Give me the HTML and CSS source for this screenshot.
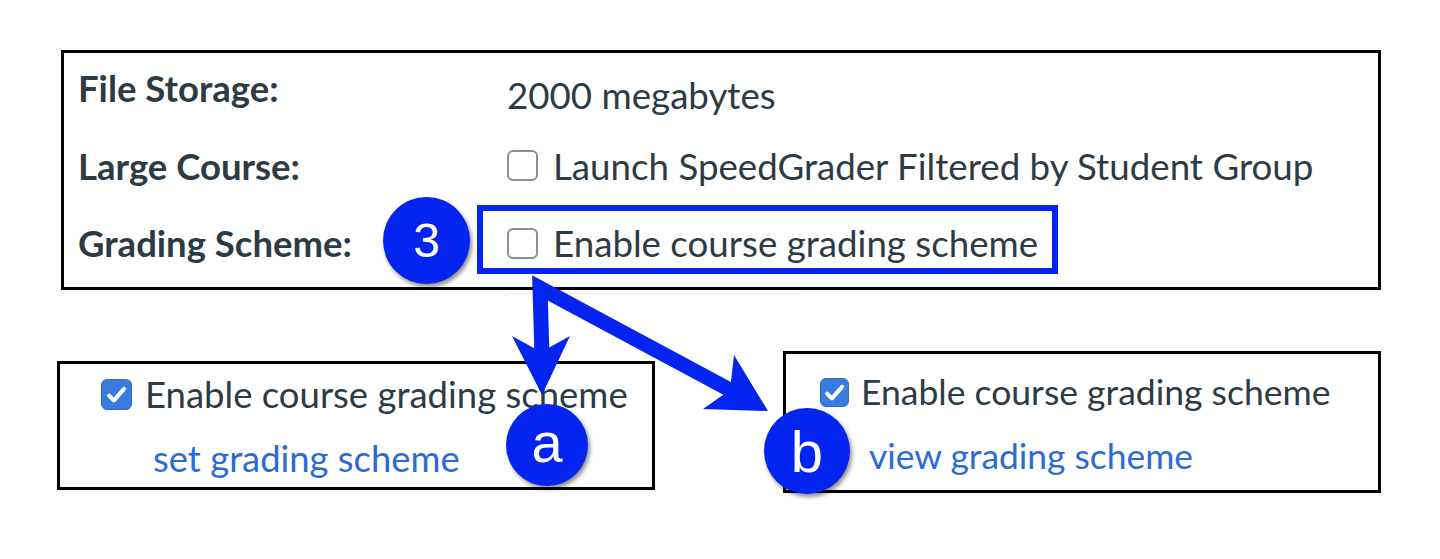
FILE: index.html
```html
<!DOCTYPE html>
<html lang="en">
<head>
    <meta charset="UTF-8">
    <meta name="viewport" content="width=device-width, initial-scale=1.0">
    <title>Grading Scheme Setting</title>
    <link rel="stylesheet" href="styles.css">
</head>
<body>

    <div class="shot">
        <!-- course details panel -->
        <section class="settings">
            <div class="label">File Storage:</div>
            <div class="value value-text">2000 megabytes</div>

            <div class="label">Large Course:</div>
            <label class="value"><span class="box"></span>Launch SpeedGrader Filtered by Student Group</label>

            <div class="label">Grading Scheme:</div>
            <label class="value"><span class="box"></span>Enable course grading scheme</label>
        </section>

        <!-- the two outcomes once the box is ticked -->
        <div class="results">
            <section class="card card-a">
                <label class="check">
                    <span class="box checked">
                        <svg viewBox="0 0 20 20"><path d="M4.5 10.8l3.6 3.6L15.6 5.8" /></svg>
                    </span>
                    Enable course grading scheme
                </label>
                <a class="link" href="#">set grading scheme</a>
            </section>

            <section class="card card-b">
                <label class="check">
                    <span class="box checked">
                        <svg viewBox="0 0 20 20"><path d="M4.5 10.8l3.6 3.6L15.6 5.8" /></svg>
                    </span>
                    Enable course grading scheme
                </label>
                <a class="link" href="#">view grading scheme</a>
            </section>
        </div>

        <!-- callouts drawn over the panels -->
        <svg class="marks" width="1440" height="559" viewBox="0 0 1440 559">
            <line x1="508" y1="293" x2="800" y2="293" stroke="#e4e4e4" stroke-width="1" />
            <rect x="480" y="208" width="575" height="63" fill="none" stroke="#0424ef" stroke-width="6" />
            <polyline points="542,356 540,288 732,391" fill="none" stroke="#0424ef" stroke-width="15" stroke-linejoin="miter" />
            <polygon points="542,395 512,336 541,352 570,336" fill="#0424ef" />
            <polygon points="768,411 734,355 730,390 703,409" fill="#0424ef" />
        </svg>

        <span class="step step-3">3</span>
        <span class="step step-a">a</span>
        <span class="step step-b">b</span>
    </div>

</body>
</html>
```

FILE: styles.css
```css
body {
    margin: 0;
    background: white;
    font-family: Lato, "Open Sans", sans-serif;
    color: #2d3b45;
}
.shot {
    position: relative;
    width: 1440px;
    height: 559px;
    overflow: hidden;
}

/* top panel */
.settings {
    box-sizing: border-box;
    width: 1320px;
    height: 240px;
    margin: 50px 0 0 61px;
    border: 3px solid #000;
    padding: 13px 0 0 14px;
    display: grid;
    grid-template-columns: 429px 1fr;
    align-content: start;
    align-items: start;
    row-gap: 33.5px;
}
.label {
    font-weight: bold;
    font-size: 36.5px;
    line-height: 44px;
}
.value {
    display: flex;
    align-items: center;
    gap: 15px;
    font-size: 36.7px;
    line-height: 44px;
}
.value-text {
    padding-top: 7px;
    margin-bottom: -7px;
}

/* checkboxes */
.box {
    box-sizing: border-box;
    flex: none;
    width: 31px;
    height: 31px;
    border: 2px solid #8a9096;
    border-radius: 6px;
    background: white;
}
.box.checked {
    border: 1px solid #2f6ccc;
    background: #3a7be0;
    display: flex;
    align-items: center;
    justify-content: center;
}
.box.checked svg {
    width: 27px;
    height: 27px;
    fill: none;
    stroke: white;
    stroke-width: 3;
    stroke-linecap: round;
    stroke-linejoin: round;
}

/* bottom cards */
.results {
    display: flex;
    align-items: flex-start;
    margin-top: 61px;
}
.card {
    box-sizing: border-box;
    width: 598px;
    border: 3px solid #000;
    display: flex;
    flex-direction: column;
    align-items: flex-start;
}
.card-a {
    height: 129px;
    margin: 10px 0 0 57px;
    padding: 8px 0 0 41px;
}
.card-b {
    height: 142px;
    margin-left: 128px;
    padding: 16px 0 0 34px;
}
.check {
    display: flex;
    align-items: center;
    gap: 13px;
    font-size: 36.5px;
    line-height: 44px;
}
.card-b .check {
    font-size: 35.5px;
    gap: 12px;
}
.card-b .box {
    width: 29px;
    height: 29px;
}
.link {
    color: #2b6bd6;
    text-decoration: none;
    font-size: 36.4px;
    line-height: 44px;
    margin: 20px 0 0 52px;
}
.card-b .link {
    font-size: 35.4px;
    margin: 20px 0 0 49px;
}

/* overlay callouts */
.marks {
    position: absolute;
    left: 0;
    top: 0;
    pointer-events: none;
}
.step {
    position: absolute;
    display: flex;
    align-items: center;
    justify-content: center;
    border-radius: 50%;
    background: #0424ef;
    color: white;
    font-family: "Liberation Sans", Arial, sans-serif;
    box-shadow: 2px 3px 4px rgba(0, 0, 0, 0.45);
}
.step-3 {
    left: 383px;
    top: 197px;
    width: 87px;
    height: 87px;
    font-size: 48px;
}
.step-a {
    left: 506px;
    top: 404px;
    width: 82px;
    height: 82px;
    font-size: 56px;
    padding-bottom: 6px;
    box-sizing: border-box;
}
.step-b {
    left: 764px;
    top: 408px;
    width: 86px;
    height: 86px;
    font-size: 58px;
}
```
